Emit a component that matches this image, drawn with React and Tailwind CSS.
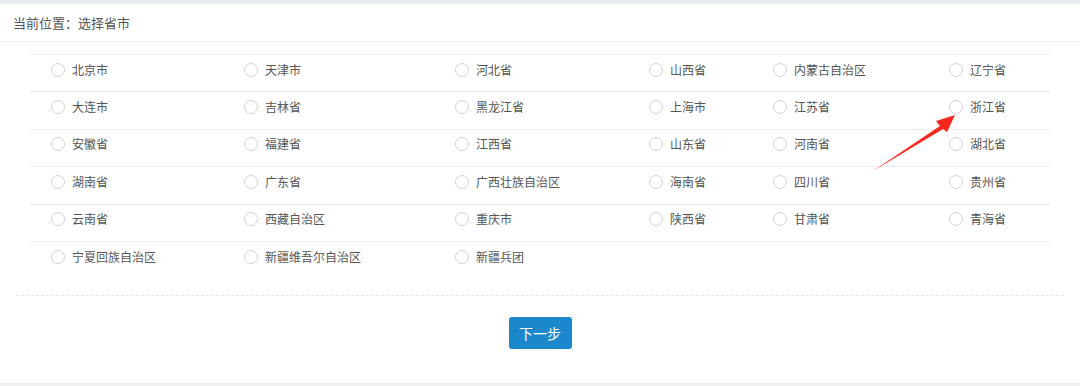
import React from "react";

const rows = [
  ["北京市", "天津市", "河北省", "山西省", "内蒙古自治区", "辽宁省"],
  ["大连市", "吉林省", "黑龙江省", "上海市", "江苏省", "浙江省"],
  ["安徽省", "福建省", "江西省", "山东省", "河南省", "湖北省"],
  ["湖南省", "广东省", "广西壮族自治区", "海南省", "四川省", "贵州省"],
  ["云南省", "西藏自治区", "重庆市", "陕西省", "甘肃省", "青海省"],
  ["宁夏回族自治区", "新疆维吾尔自治区", "新疆兵团"],
];

const Radio = ({ label }) => (
  <label className="flex items-center pl-[21px] pb-[7px] cursor-pointer">
    <span className="w-[14px] h-[14px] rounded-full border border-[#d2d2d2] bg-white shrink-0"></span>
    <span className="ml-[7px] text-[12px] text-[#555]">{label}</span>
  </label>
);

const App = () => {
  return (
    <div
      className="relative w-[1080px] h-[386px] bg-white flex flex-col overflow-hidden"
      style={{ fontFamily: '"Noto Sans CJK SC", "Noto Sans", sans-serif' }}
    >
      <div className="h-[4px] bg-[#e8ebef]"></div>

      {/* header */}
      <div className="h-[38px] px-[13px] flex items-center border-b border-[#ececec] text-[13px] text-[#555]">
        当前位置：选择省市
      </div>

      {/* province table */}
      <div className="mx-[30px] mt-[12px]">
        {rows.map((row, i) => (
          <div
            key={i}
            className="grid grid-cols-[193px_211px_194px_124px_176px_124px] h-[37.4px] border-t border-[#ebebeb]"
          >
            {row.map((name) => (
              <Radio key={name} label={name} />
            ))}
          </div>
        ))}
      </div>

      <div className="mx-[16px] mt-[17px] border-t border-dashed border-[#e3e3e3]"></div>

      <div className="flex justify-center mt-[21px]">
        <button className="w-[63px] h-[32px] rounded-[3px] bg-[#1b87cc] text-white text-[14px]">
          下一步
        </button>
      </div>

      <div className="mt-auto h-[3px] bg-[#f0f0f0]"></div>

      {/* annotation arrow */}
      <svg
        className="absolute left-0 top-0 pointer-events-none"
        width="1080"
        height="386"
      >
        <polygon
          points="873,171 940,126 936,121 955,115 947,132 943,129"
          fill="#f5281e"
        />
      </svg>
    </div>
  );
};

export default App;
